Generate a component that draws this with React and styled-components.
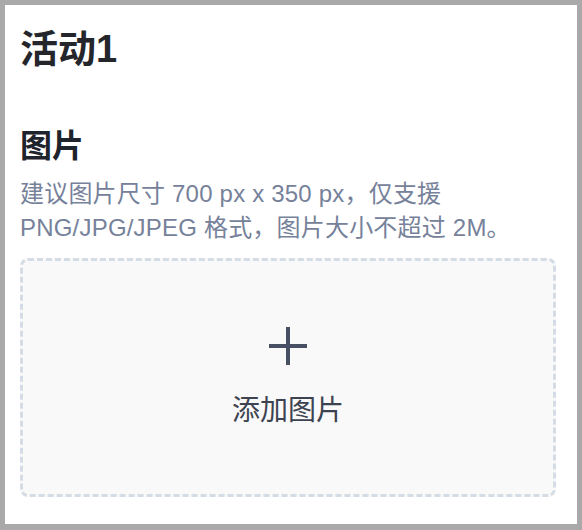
import React from "react"
import styled, { createGlobalStyle } from "styled-components"

const GlobalStyle = createGlobalStyle`
  html, body {
    margin: 0;
    padding: 0;
    background: #a9a9a9;
  }
  body {
    font-family: "Liberation Sans", "Noto Sans CJK SC", sans-serif;
  }
`

const Card = styled.div`
  margin: 5px 5px 6px 5px;
  height: 519px;
  box-sizing: border-box;
  background: #fff;
  padding: 22px 21px 0 15px;
`

const Title = styled.h1`
  margin: 0;
  font-size: 38px;
  line-height: 44px;
  font-weight: 700;
  color: #24262b;
`

const FieldLabel = styled.h2`
  margin: 56px 0 0;
  font-size: 32px;
  line-height: 38px;
  font-weight: 700;
  color: #1f232c;
`

const Hint = styled.p`
  margin: 12px 0 0;
  font-size: 24px;
  line-height: 34px;
  letter-spacing: 0.2px;
  color: #76819a;
`

const Uploader = styled.button`
  margin-top: 13px;
  width: 100%;
  height: 239px;
  box-sizing: border-box;
  border: 3px dashed #d4dde6;
  border-radius: 8px;
  background: #f9f9f9;
  display: flex;
  flex-direction: column;
  align-items: center;
  justify-content: center;
  gap: 29px;
  padding: 0;
  cursor: pointer;
  font-family: inherit;
`

const PlusIcon = styled.svg`
  width: 38px;
  height: 38px;
  color: #465062;
  display: block;
`

const UploadText = styled.span`
  font-size: 28px;
  line-height: 34px;
  color: #3d4350;
`

const Plus = () => (
  <PlusIcon viewBox="0 0 38 38">
    <line x1="19" y1="0" x2="19" y2="38" stroke="currentColor" strokeWidth="4" />
    <line x1="0" y1="19" x2="38" y2="19" stroke="currentColor" strokeWidth="4" />
  </PlusIcon>
)

const App = () => {
  return (
    <>
      <GlobalStyle />
      <Card>
        <Title>活动1</Title>
        <FieldLabel>图片</FieldLabel>
        <Hint>
          建议图片尺寸 700 px x 350 px，仅支援 PNG/JPG/JPEG 格式，图片大小不超过 2M。
        </Hint>
        <Uploader type="button">
          <Plus />
          <UploadText>添加图片</UploadText>
        </Uploader>
      </Card>
    </>
  )
}

export default App
